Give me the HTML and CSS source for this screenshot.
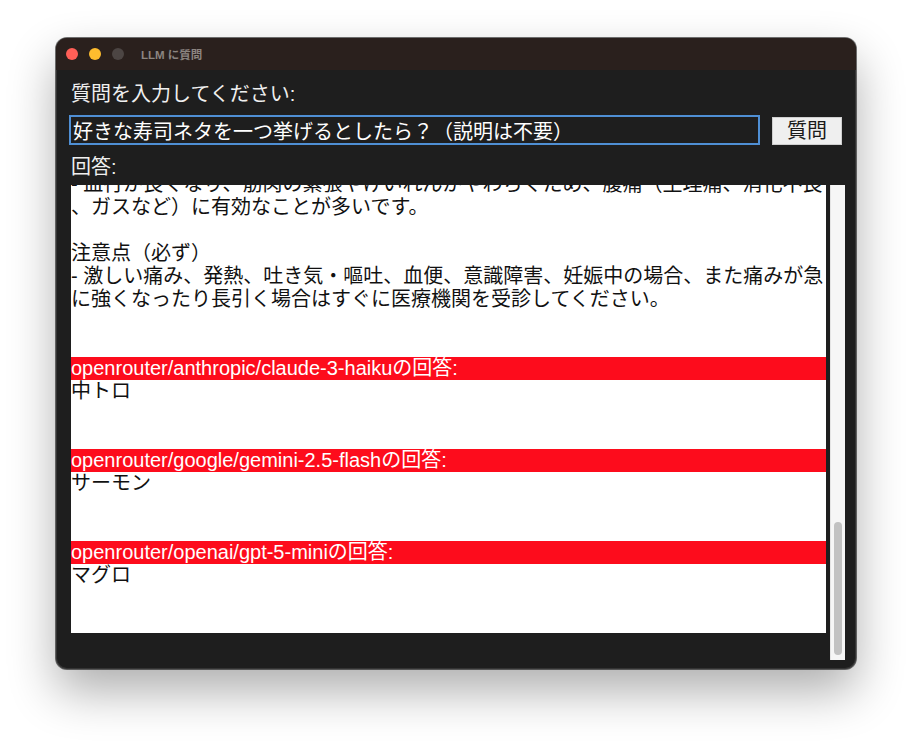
FILE: index.html
```html
<!DOCTYPE html>
<html lang="ja">
<head>
<meta charset="utf-8">
<title>LLM に質問</title>
<link rel="stylesheet" href="styles.css">
</head>
<body>
<div class="window">
  <div class="titlebar">
    <span class="light red"></span>
    <span class="light yellow"></span>
    <span class="light gray"></span>
    <span class="title">LLM に質問</span>
  </div>
  <div class="content">
    <div class="label">質問を入力してください:</div>
    <div class="ask-row">
      <input class="ask-input" type="text" value="好きな寿司ネタを一つ挙げるとしたら？（説明は不要）">
      <button class="ask-btn">質問</button>
    </div>
    <div class="label answer-label">回答:</div>
    <div class="answer-row">
      <div class="answer-box">
        <div class="answer-scroll">
          <div class="line">- 血行が良くなり、筋肉の緊張やけいれんがやわらぐため、腹痛（生理痛、消化不良</div>
          <div class="line">、ガスなど）に有効なことが多いです。</div>
          <div class="line"></div>
          <div class="line">注意点（必ず）</div>
          <div class="line">- 激しい痛み、発熱、吐き気・嘔吐、血便、意識障害、妊娠中の場合、また痛みが急</div>
          <div class="line">に強くなったり長引く場合はすぐに医療機関を受診してください。</div>
          <div class="line"></div>
          <div class="line"></div>
          <div class="line model">openrouter/anthropic/claude-3-haikuの回答:</div>
          <div class="line">中トロ</div>
          <div class="line"></div>
          <div class="line"></div>
          <div class="line model">openrouter/google/gemini-2.5-flashの回答:</div>
          <div class="line">サーモン</div>
          <div class="line"></div>
          <div class="line"></div>
          <div class="line model">openrouter/openai/gpt-5-miniの回答:</div>
          <div class="line">マグロ</div>
          <div class="line"></div>
          <div class="line"></div>
        </div>
      </div>
      <div class="scrollbar"><div class="thumb"></div></div>
    </div>
  </div>
</div>
</body>
</html>
```

FILE: styles.css
```css
html, body {
  margin: 0;
  padding: 0;
  background: #ffffff;
}

body {
  box-sizing: border-box;
  min-height: 744px;
  padding: 38px 0 0 56px;
  font-family: "Liberation Sans", "Noto Sans CJK JP", sans-serif;
}

.window {
  box-sizing: border-box;
  width: 800px;
  height: 631px;
  border-radius: 11px;
  background: #1e1e1e;
  overflow: hidden;
  box-shadow: 0 0 0 1px rgba(0, 0, 0, 0.55),
              inset 0 0 0 1px rgba(255, 255, 255, 0.10),
              0 22px 48px rgba(0, 0, 0, 0.32);
}

.titlebar {
  height: 32px;
  background: #2a201d;
  display: flex;
  align-items: center;
  padding-left: 10px;
}

.light {
  width: 12px;
  height: 12px;
  border-radius: 50%;
  margin-right: 11px;
}

.light.red { background: #ff5f57; }
.light.yellow { background: #febc2e; }
.light.gray { background: #4c4543; margin-right: 0; }

.title {
  margin-left: 17px;
  font-size: 11.5px;
  font-weight: bold;
  color: #8c8581;
}

.content {
  padding: 12px 11px 0 13px;
}

.label {
  font-size: 20px;
  line-height: 24px;
  color: #efefef;
  padding-left: 2px;
}

.ask-row {
  margin-top: 9px;
  display: flex;
  align-items: flex-start;
}

.ask-input {
  box-sizing: border-box;
  width: 691px;
  height: 30px;
  margin: 0;
  padding: 0 2px;
  border: 2px solid #4f8fd4;
  background: #1e1e1e;
  color: #ffffff;
  font-family: "Liberation Sans", "Noto Sans CJK JP", sans-serif;
  font-size: 20px;
  outline: none;
}

.ask-btn {
  box-sizing: border-box;
  width: 70px;
  height: 28px;
  margin: 2px 0 0 12px;
  padding: 0;
  border: 1px solid #cfcfcf;
  background: #efefef;
  color: #1a1a1a;
  font-family: "Liberation Sans", "Noto Sans CJK JP", sans-serif;
  font-size: 20px;
  line-height: 26px;
}

.answer-label {
  margin-top: 10px;
}

.answer-row {
  margin-top: 6px;
  padding-left: 2px;
  display: flex;
  align-items: flex-start;
}

.answer-box {
  width: 755px;
  height: 448px;
  background: #ffffff;
  overflow: hidden;
}

.answer-scroll {
  margin-top: -12px;
}

.line {
  height: 23px;
  font-size: 20px;
  line-height: 23px;
  color: #111111;
  white-space: nowrap;
}

.line.model {
  background: #fd0c1c;
  color: #ffffff;
}

.scrollbar {
  box-sizing: border-box;
  width: 15px;
  height: 475px;
  margin-left: 4px;
  background: #f6f6f6;
  border-left: 1px solid #e4e4e4;
  padding: 337px 3px 0 3px;
}

.thumb {
  height: 133px;
  border-radius: 4px;
  background: #c2c2c2;
}
```
